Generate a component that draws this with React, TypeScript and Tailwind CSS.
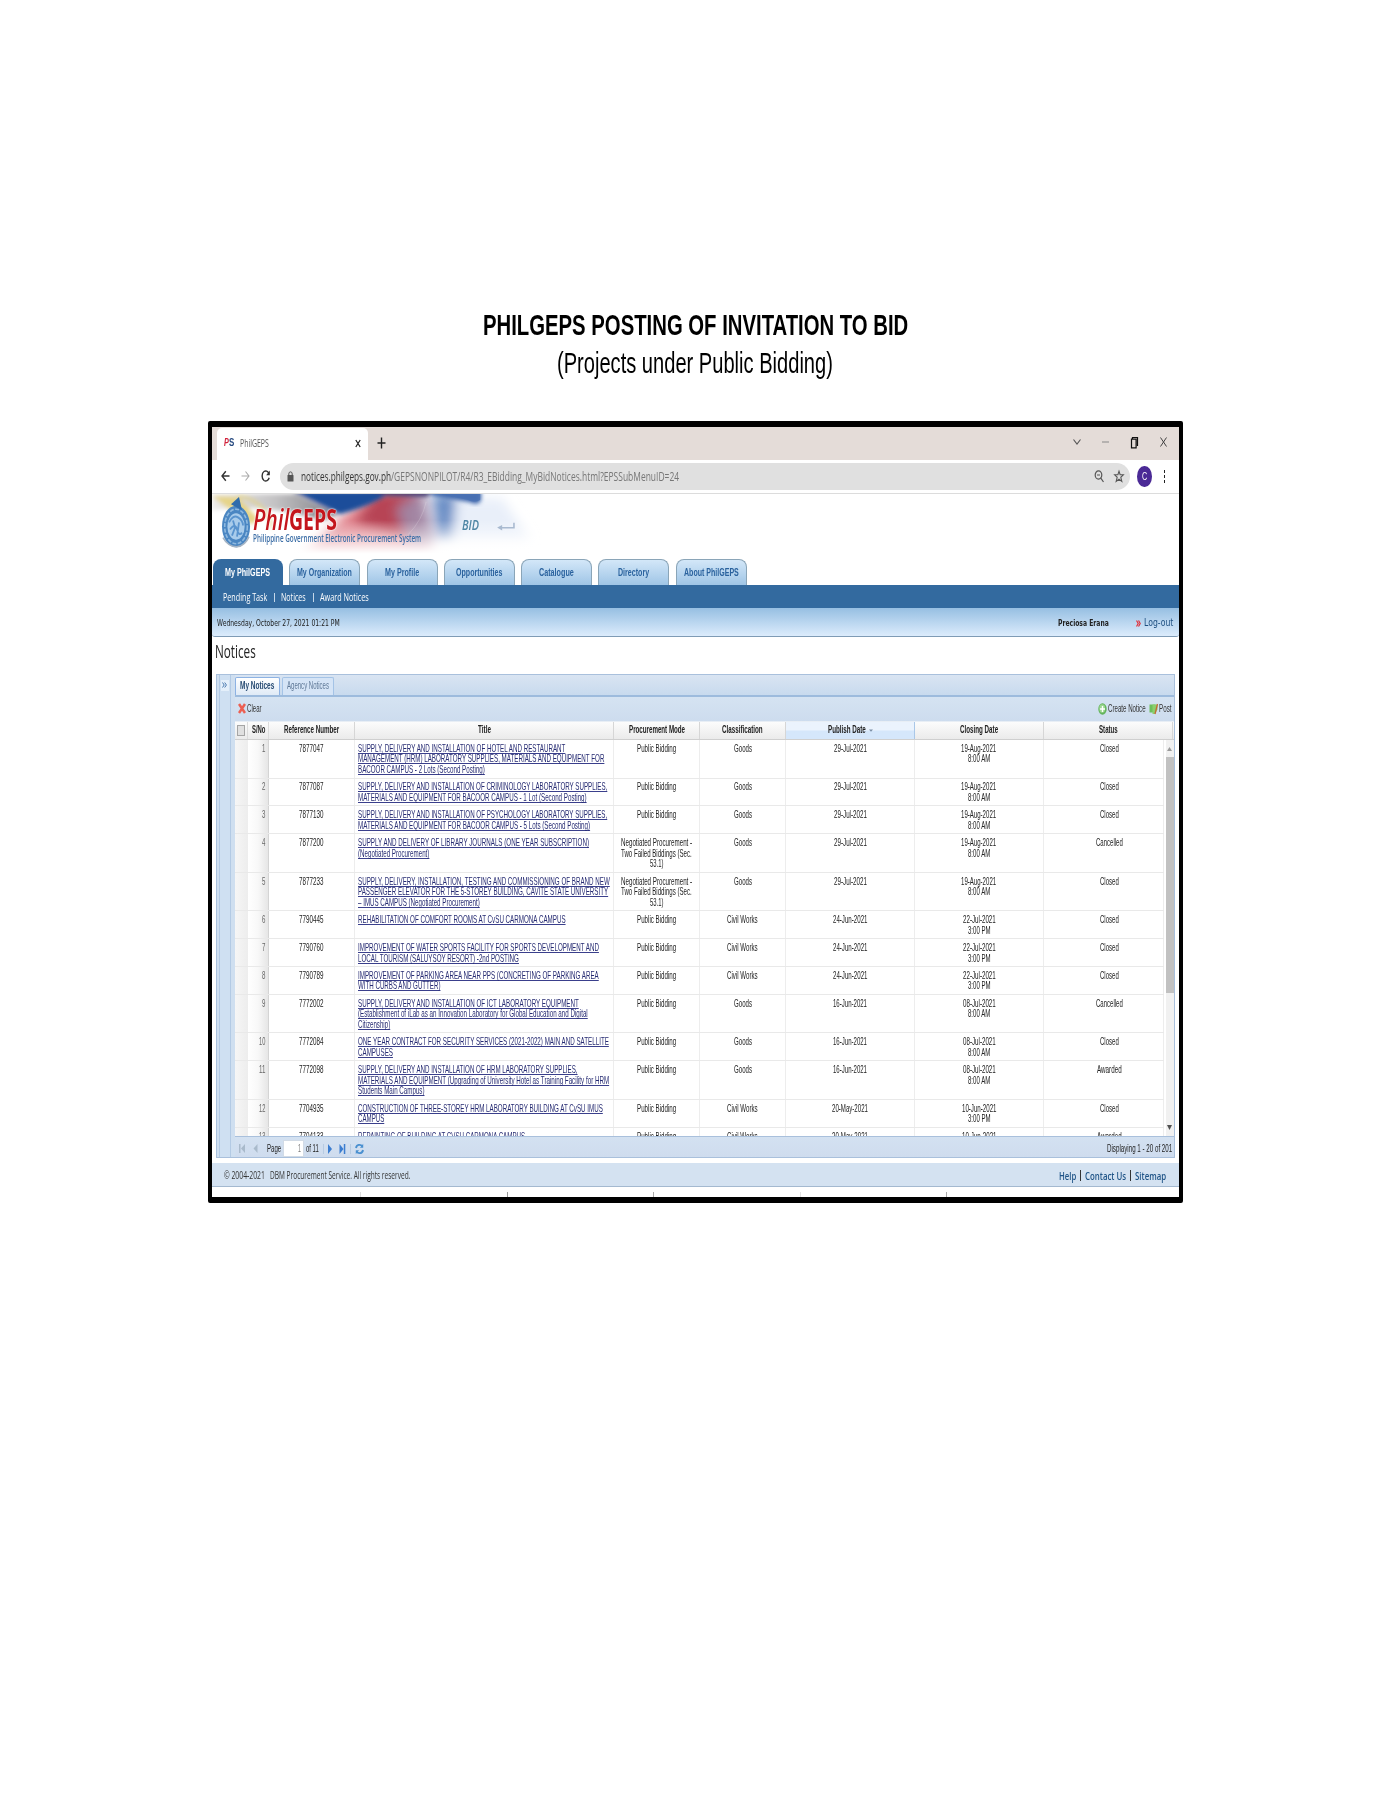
import { useLayoutEffect, useRef, useState, type ReactNode } from "react";

/** Single-line label condensed horizontally to a given width. */
function Fit({ w, className = "", inner = "", children }: { w: number; className?: string; inner?: string; children: ReactNode }) {
  const ref = useRef<HTMLSpanElement>(null);
  const [scale, setScale] = useState(1);
  useLayoutEffect(() => {
    if (ref.current) setScale(w / ref.current.offsetWidth);
  }, [w]);
  return (
    <span className={`block shrink-0 whitespace-nowrap ${className}`} style={{ width: w }}>
      <span ref={ref} className={`inline-block origin-left ${inner}`} style={{ transform: `scaleX(${scale})` }}>
        {children}
      </span>
    </span>
  );
}

type Line = [string, number];
type Notice = {
  no: number;
  ref: string;
  title: Line[];
  mode: Line[];
  cls: Line;
  pub: Line;
  close: Line;
  time: string;
  status: Line;
};

const PB: Line[] = [["Public Bidding", 39.5]];
const NP: Line[] = [
  ["Negotiated Procurement -", 71],
  ["Two Failed Biddings (Sec.", 70.5],
  ["53.1)", 13.5],
];
const GOODS: Line = ["Goods", 18];
const CIVIL: Line = ["Civil Works", 30.5];
const CLOSED: Line = ["Closed", 19];
const CANCELLED: Line = ["Cancelled", 27];
const AWARDED: Line = ["Awarded", 24.5];
const JUL29: Line = ["29-Jul-2021", 32.7];
const JUN24: Line = ["24-Jun-2021", 34.5];
const JUN16: Line = ["16-Jun-2021", 34];
const MAY20: Line = ["20-May-2021", 36];
const AUG19: Line = ["19-Aug-2021", 35.3];
const JUL22: Line = ["22-Jul-2021", 32.5];
const JUL08: Line = ["08-Jul-2021", 32.5];
const JUN10: Line = ["10-Jun-2021", 34.5];

const notices: Notice[] = [
  { no: 1, ref: "7877047", title: [["SUPPLY, DELIVERY AND INSTALLATION OF HOTEL AND RESTAURANT", 207.3], ["MANAGEMENT (HRM) LABORATORY SUPPLIES, MATERIALS AND EQUIPMENT FOR", 246.5], ["BACOOR CAMPUS - 2 Lots (Second Posting)", 127]], mode: PB, cls: GOODS, pub: JUL29, close: AUG19, time: "8:00 AM", status: CLOSED },
  { no: 2, ref: "7877087", title: [["SUPPLY, DELIVERY AND INSTALLATION OF CRIMINOLOGY LABORATORY SUPPLIES,", 249.5], ["MATERIALS AND EQUIPMENT FOR BACOOR CAMPUS - 1 Lot (Second Posting)", 228.7]], mode: PB, cls: GOODS, pub: JUL29, close: AUG19, time: "8:00 AM", status: CLOSED },
  { no: 3, ref: "7877130", title: [["SUPPLY, DELIVERY AND INSTALLATION OF PSYCHOLOGY LABORATORY SUPPLIES,", 249.5], ["MATERIALS AND EQUIPMENT FOR BACOOR CAMPUS - 5 Lots (Second Posting)", 232]], mode: PB, cls: GOODS, pub: JUL29, close: AUG19, time: "8:00 AM", status: CLOSED },
  { no: 4, ref: "7877200", title: [["SUPPLY AND DELIVERY OF LIBRARY JOURNALS (ONE YEAR SUBSCRIPTION)", 231], ["(Negotiated Procurement)", 71.5]], mode: NP, cls: GOODS, pub: JUL29, close: AUG19, time: "8:00 AM", status: CANCELLED },
  { no: 5, ref: "7877233", title: [["SUPPLY, DELIVERY, INSTALLATION, TESTING AND COMMISSIONING OF BRAND NEW", 251.7], ["PASSENGER ELEVATOR FOR THE 5-STOREY BUILDING, CAVITE STATE UNIVERSITY", 250], ["– IMUS CAMPUS (Negotiated Procurement)", 122]], mode: NP, cls: GOODS, pub: JUL29, close: AUG19, time: "8:00 AM", status: CLOSED },
  { no: 6, ref: "7790445", title: [["REHABILITATION OF COMFORT ROOMS AT CvSU CARMONA CAMPUS", 207.3]], mode: PB, cls: CIVIL, pub: JUN24, close: JUL22, time: "3:00 PM", status: CLOSED },
  { no: 7, ref: "7790760", title: [["IMPROVEMENT OF WATER SPORTS FACILITY FOR SPORTS DEVELOPMENT AND", 241], ["LOCAL TOURISM (SALUYSOY RESORT) -2nd POSTING", 161]], mode: PB, cls: CIVIL, pub: JUN24, close: JUL22, time: "3:00 PM", status: CLOSED },
  { no: 8, ref: "7790789", title: [["IMPROVEMENT OF PARKING AREA NEAR PPS (CONCRETING OF PARKING AREA", 240.7], ["WITH CURBS AND GUTTER)", 82.7]], mode: PB, cls: CIVIL, pub: JUN24, close: JUL22, time: "3:00 PM", status: CLOSED },
  { no: 9, ref: "7772002", title: [["SUPPLY, DELIVERY AND INSTALLATION OF ICT LABORATORY EQUIPMENT", 220.7], ["(Establishment of iLab as an Innovation Laboratory for Global Education and Digital", 230], ["Citizenship)", 32.3]], mode: PB, cls: GOODS, pub: JUN16, close: JUL08, time: "8:00 AM", status: CANCELLED },
  { no: 10, ref: "7772084", title: [["ONE YEAR CONTRACT FOR SECURITY SERVICES (2021-2022) MAIN AND SATELLITE", 250.7], ["CAMPUSES", 35]], mode: PB, cls: GOODS, pub: JUN16, close: JUL08, time: "8:00 AM", status: CLOSED },
  { no: 11, ref: "7772098", title: [["SUPPLY, DELIVERY AND INSTALLATION OF HRM LABORATORY SUPPLIES,", 219.5], ["MATERIALS AND EQUIPMENT (Upgrading of University Hotel as Training Facility for HRM", 251], ["Students Main Campus)", 66.7]], mode: PB, cls: GOODS, pub: JUN16, close: JUL08, time: "8:00 AM", status: AWARDED },
  { no: 12, ref: "7704935", title: [["CONSTRUCTION OF THREE-STOREY HRM LABORATORY BUILDING AT CvSU IMUS", 245], ["CAMPUS", 26.3]], mode: PB, cls: CIVIL, pub: MAY20, close: JUN10, time: "3:00 PM", status: CLOSED },
  { no: 13, ref: "7704133", title: [["REPAINTING OF BUILDING AT CVSU CARMONA CAMPUS", 167]], mode: PB, cls: CIVIL, pub: MAY20, close: JUN10, time: "3:00 PM", status: AWARDED },
];

const COLS = "grid grid-cols-[13.5px_21px_86px_259px_86px_86px_129px_129px_120px]";
const CELL = "flex flex-col items-center border-r border-[#ededed] pt-[2.8px]";

function Row({ n }: { n: Notice }) {
  const tall = n.title.length === 3 || n.mode.length === 3;
  return (
    <div className={`${COLS} ${tall ? "h-[38.5px]" : "h-[27.9px]"} shrink-0 border-b border-[#e9e9e9]`}>
      <div className="bg-linear-to-r from-[#f6f6f6] to-[#ededed]" />
      <div className="flex flex-col items-end border-r border-[#d4d4d4] bg-linear-to-r from-white via-[#f8f8f8] to-[#e6e6e6] pt-[2.8px] pr-[2.5px] text-[#666]">
        <Fit w={n.no > 9 ? 6.5 : 3.5}>{n.no}</Fit>
      </div>
      <div className={CELL}>
        <Fit w={24.5} className="-ml-[0.5px]">{n.ref}</Fit>
      </div>
      <div className="border-r border-[#ededed] pt-[2.8px] pl-[2.5px] text-[#262b72]">
        {n.title.map(([t, w]) => (
          <Fit key={t} w={w} inner="underline decoration-[#3a3f8c] decoration-1 underline-offset-[1px] [text-decoration-skip-ink:none]">{t}</Fit>
        ))}
      </div>
      <div className={CELL}>
        {n.mode.map(([t, w]) => (
          <Fit key={t} w={w}>{t}</Fit>
        ))}
      </div>
      <div className={CELL}>
        <Fit w={n.cls[1]}>{n.cls[0]}</Fit>
      </div>
      <div className={CELL}>
        <Fit w={n.pub[1]}>{n.pub[0]}</Fit>
      </div>
      <div className={CELL}>
        <Fit w={n.close[1]}>{n.close[0]}</Fit>
        <Fit w={22.5}>{n.time}</Fit>
      </div>
      <div className={`${CELL} pl-[11px]`}>
        <Fit w={n.status[1]}>{n.status[0]}</Fit>
      </div>
    </div>
  );
}

function Banner() {
  return (
    <svg className="absolute inset-0 h-full w-full" viewBox="0 0 966 64" preserveAspectRatio="none">
      <defs>
        <filter id="b2" x="-20%" y="-20%" width="140%" height="140%"><feGaussianBlur stdDeviation="2" /></filter>
        <filter id="b6" x="-50%" y="-50%" width="200%" height="200%"><feGaussianBlur stdDeviation="6" /></filter>
        <linearGradient id="fade" x1="0" y1="0" x2="0" y2="1">
          <stop offset="0.4" stopColor="#fff" stopOpacity="0" />
          <stop offset="0.92" stopColor="#fff" />
        </linearGradient>
        <linearGradient id="silver" x1="0" y1="0" x2="1" y2="0">
          <stop offset="0" stopColor="#ebe9e6" />
          <stop offset="0.5" stopColor="#b9b8ba" />
          <stop offset="1" stopColor="#66666e" />
        </linearGradient>
      </defs>
      <g filter="url(#b6)">
        <path d="M90 62 L128 24 L160 -2 L206 -2 L220 62Z" fill="#dc6d78" opacity="0.85" />
        <path d="M142 28 L166 -4 L206 -4 L200 46Z" fill="#b03a4c" opacity="0.85" />
        <path d="M184 14 L212 -4 L224 50 L198 54Z" fill="#a08aa8" opacity="0.9" />
        <path d="M220 0 H244 L242 46 L226 44Z" fill="#5f86c2" opacity="0.95" />
        <path d="M244 4 H290 L318 46 H238Z" fill="#e3ebf8" opacity="0.8" />
      </g>
      <g filter="url(#b2)">
        <path d="M0 0 H84 L126 20 L110 26 Q50 8 0 16Z" fill="url(#silver)" opacity="0.85" />
        <path d="M80 -3 H180 Q164 10 128 20Z" fill="#1d4d9a" />
        <path d="M160 -3 H222 L214 3 L176 2Z" fill="#4a3f74" />
        <path d="M0 2 L26 3 L48 26 L38 30Z" fill="#e6d488" />
        <path d="M26 2 Q54 6 60 34" stroke="#e0d28c" strokeWidth="3" fill="none" />
      </g>
      <rect width="330" height="64" fill="url(#fade)" />
      <path d="M214 -3 H269 V6 Q266 12 258 8 L222 2Z" fill="#3d66ac" filter="url(#b2)" />
      <path d="M230 0 H268 V6 Q262 9 256 6Z" fill="#4b72b4" opacity="0.8" />
      <path d="M214 8 Q210 26 196 40" stroke="#fff" strokeWidth="0.7" opacity="0.25" fill="none" />
      <g>
        <ellipse cx="24" cy="32" rx="14" ry="20.5" fill="#4a86c2" />
        <path d="M19 10 L27 3 L30 16Z" fill="#2f6cac" />
        <ellipse cx="24" cy="32" rx="11.3" ry="17" fill="none" stroke="#8fb9df" strokeWidth="1.6" strokeDasharray="4 1.5" />
        <ellipse cx="24" cy="32" rx="8.6" ry="13" fill="#a9cceb" />
        <path d="M17 28 Q21 20 26 23 T31 31 M18 35 Q23 28 25 35 T30 38 M21 26 L23 33 L20 41 M27 28 L25 42" stroke="#5a94ce" strokeWidth="1.8" fill="none" />
        <path d="M11 43 Q16 52 25 52 Q33 51 37 42" stroke="#a5b4c4" strokeWidth="1.6" fill="none" />
      </g>
      <path d="M285 33 l5 -2.6 v2 h11 v-4 h1.6 v5.6 h-12.6 v2z" fill="#a9bad0" />
    </svg>
  );
}

const tabs: [string, number][] = [
  ["My Organization", 55],
  ["My Profile", 34],
  ["Opportunities", 46.5],
  ["Catalogue", 35],
  ["Directory", 31],
  ["About PhilGEPS", 55],
];

const headers: [string, number][] = [
  ["Reference Number", 55],
  ["Title", 12.7],
  ["Procurement Mode", 56],
  ["Classification", 40.5],
  ["Publish Date", 38],
  ["Closing Date", 38],
];

function BrowserChrome() {
  return (
    <>
      <div className="flex h-[33px] shrink-0 items-start bg-[#e4dcd8] pl-[4.5px] pt-[1px]">
        <div className="flex h-[32px] w-[151px] items-center rounded-t-[5px] bg-white pb-[2px] pl-[7.5px] font-['Open_Sans',sans-serif]">
          <span className="flex">
            <Fit w={5} className="font-['Liberation_Sans',sans-serif] text-[11.5px] font-bold italic text-[#d2213a]">P</Fit>
            <Fit w={5.5} className="font-['Liberation_Sans',sans-serif] text-[11.5px] font-bold text-[#26497f]">S</Fit>
          </span>
          <Fit w={29} className="ml-[5px] text-[11px] text-[#555]">PhilGEPS</Fit>
          <svg className="ml-[86px]" width="6" height="9" viewBox="0 0 6 9"><path d="M.8 1 5.2 8M5.2 1 .8 8" stroke="#222" strokeWidth="1.2" /></svg>
        </div>
        <svg className="ml-[9.5px] mt-[9px]" width="9" height="12" viewBox="0 0 9 12"><path d="M4.5 .5v11M.5 6h8" stroke="#222" strokeWidth="1.4" /></svg>
        <svg className="ml-[680px] mt-[8px]" width="102" height="13" viewBox="0 0 102 13" fill="none">
          <path d="M7.5 3.5 11 8 14.5 3.5" stroke="#555" strokeWidth="1.1" />
          <path d="M36 6h7" stroke="#888" />
          <path d="M65.5 3.200h4.600v8.600h-4.600zM66.500 3V1.500h5V10" stroke="#111" strokeWidth="1.200" />
          <path d="M94.500 1.500 100.500 10.500M100.500 1.500 94.500 10.500" stroke="#444" />
        </svg>
      </div>
      <div className="flex h-[33.5px] shrink-0 items-center border-b-[1.5px] border-[#dcdcdc] bg-white pl-[9px]">
        <svg width="52" height="14" viewBox="0 0 52 14" fill="none">
          <path d="M8.500 7H1.200M4.800 2.200 1 7l3.800 4.800" stroke="#333" strokeWidth="1.400" />
          <path d="M20.500 7h7.500M24.500 2.500 28 7l-3.500 4.500" stroke="#aaa" strokeWidth="1.100" />
          <path d="M48 4.500C46.800 2.200 44.800 1.400 43 2.500 40.500 4 40.500 9.800 43 11.500c2 1.200 4.400.2 5.200-2.800" stroke="#333" strokeWidth="1.400" />
          <path d="M48.800 1.500v4.800h-3.600z" fill="#333" />
        </svg>
        <div className="ml-[7px] flex h-[27px] w-[850px] items-center rounded-full bg-[#e0e0e0] pl-[7px]">
          <svg width="7" height="11" viewBox="0 0 7 11"><rect y="4" x=".5" width="6" height="6.500" rx=".6" fill="#555" /><path d="M1.800 4.500V2.800a1.700 1.900 0 0 1 3.400 0v1.700" stroke="#555" fill="none" /></svg>
          <span className="ml-[7px] flex font-['Open_Sans',sans-serif] text-[13px] leading-none">
            <Fit w={90} className="text-[#333]">notices.philgeps.gov.ph</Fit>
            <Fit w={288} className="text-[#777]">/GEPSNONPILOT/R4/R3_EBidding_MyBidNotices.html?EPSSubMenuID=24</Fit>
          </span>
          <svg className="ml-[414px]" width="32" height="14" viewBox="0 0 32 14" fill="none" stroke="#555">
            <ellipse cx="5.500" cy="6" rx="3.300" ry="4.200" strokeWidth="1.200" />
            <path d="M7.800 9.200 10.500 13M4 6h3" strokeWidth="1.200" />
            <path d="M26 2.200l1.100 3.400 3.300.2-2.600 2.500 1 4.100-2.800-2.200-2.800 2.200 1-4.100-2.600-2.500 3.300-.2z" strokeWidth="1.100" />
          </svg>
        </div>
        <div className="ml-[7px] flex h-[21px] w-[14.500px] items-center justify-center rounded-[50%] bg-[#4b2a96] font-['Liberation_Sans',sans-serif] text-[10px] text-white">
          <Fit w={5}>C</Fit>
        </div>
        <div className="ml-[12px] flex flex-col gap-[2.500px]">
          <i className="h-[2.500px] w-[1.500px] bg-[#222]" />
          <i className="h-[2.500px] w-[1.500px] bg-[#222]" />
          <i className="h-[2.500px] w-[1.500px] bg-[#222]" />
        </div>
      </div>
    </>
  );
}

function SiteHeader() {
  return (
    <>
      <div className="relative h-[65px] shrink-0 overflow-hidden bg-white">
        <Banner />
        <div className="relative flex pl-[41px] pt-[12px] font-['Open_Sans',sans-serif]">
          <div className="flex flex-col">
            <div className="flex h-[27px] items-center text-[28px] leading-[27px] [text-shadow:0_0_2px_white,0_0_2px_white]">
              <Fit w={36} className="font-semibold italic text-[#c4151c]">Phil</Fit>
              <Fit w={48} className="font-bold text-[#c4151c]">GEPS</Fit>
            </div>
            <Fit w={168} className="-mt-[2px] text-[11.500px] font-semibold leading-[13px] text-[#3c6ea6]">Philippine Government Electronic Procurement System</Fit>
          </div>
          <Fit w={17} className="ml-[41px] mt-[10px] text-[14px] font-semibold italic leading-[18px] text-[#4f86a5]">BID</Fit>
        </div>
      </div>
      <div className="flex h-[26.500px] shrink-0 gap-[6.300px] bg-white pl-[0.500px] font-['Liberation_Sans',sans-serif] text-[10.500px] font-bold text-[#2a629e]">
        <div className="flex w-[70.500px] items-center justify-center rounded-t-[8px] bg-[#336a9f] pt-[3px] text-white">
          <Fit w={45}>My PhilGEPS</Fit>
        </div>
        {tabs.map(([t, w]) => (
          <div key={t} className="flex w-[71px] items-center justify-center rounded-t-[8px] border border-b-0 border-[#8aa5b8] bg-linear-to-b from-[#d3e7f8] to-[#9fc5e6] pt-[2px]">
            <Fit w={w}>{t}</Fit>
          </div>
        ))}
      </div>
      <div className="flex h-[22.500px] shrink-0 items-center bg-[#336a9f] pl-[10.500px] pt-[3px] font-['Open_Sans',sans-serif] text-[10.500px] text-white">
        <Fit w={44.500}>Pending Task</Fit>
        <i className="mx-[6.500px] h-[9px] w-px bg-[#c3d6e8]" />
        <Fit w={25}>Notices</Fit>
        <i className="mx-[6.500px] h-[9px] w-px bg-[#c3d6e8]" />
        <Fit w={49}>Award Notices</Fit>
      </div>
      <div className="flex h-[29.500px] shrink-0 items-center rounded-b-[3px] border-b border-[#7f9bb5] bg-linear-to-b from-[#96bfe2] to-[#dcecfc] pl-[5px] pt-[3px] font-['DejaVu_Sans',sans-serif] text-[9px] text-[#222]">
        <Fit w={123}>Wednesday, October 27, 2021 01:21 PM</Fit>
        <Fit w={50.500} className="ml-[717.500px] font-bold">Preciosa Erana</Fit>
        <svg className="ml-[27.500px]" width="5" height="7" viewBox="0 0 5 7" fill="none" stroke="#e0323c" strokeWidth="1.200"><path d="M.5.500 2.200 3.500.5 6.500M2.500.500 4.200 3.500 2.500 6.500" /></svg>
        <Fit w={29.500} className="ml-[3px] text-[11px] text-[#1e4f80]">Log-out</Fit>
      </div>
      <div className="h-[36.500px] shrink-0 pl-[3px] pt-[2px] font-['Open_Sans',sans-serif] text-[18px] leading-[25px] text-[#222]">
        <Fit w={41}>Notices</Fit>
      </div>
    </>
  );
}

function NoticesPanel() {
  return (
    <div className="ml-[3.500px] flex h-[484px] w-[959.500px] shrink-0 border border-[#a9c0dc] bg-[#cfdff0] font-['Liberation_Sans',sans-serif] text-[10.500px] text-[#222]">
      <div className="mr-[3.500px] ml-[2px] flex w-[12.500px] shrink-0 justify-center border-x border-[#b3cae4] bg-[#cfe0f2] pt-[5px]">
        <div className="flex h-[11px] w-[8px] items-center justify-center bg-[#e4effa]">
          <svg width="5" height="6" viewBox="0 0 5 6" fill="none" stroke="#4b7ab0"><path d="M.500.500 2.200 3 .5 5.500M2.700.500 4.400 3 2.700 5.500" /></svg>
        </div>
      </div>
      <div className="flex min-w-0 flex-1 flex-col">
        <div className="flex h-[20px] shrink-0 items-end bg-linear-to-b from-[#d9e4f2] to-[#c8daee] pt-[2px]">
          <div className="flex h-full w-[45px] items-center justify-center rounded-t-[2px] border border-b-0 border-[#8db2e3] bg-linear-to-b from-white to-[#dfeaf6] font-bold text-[#264a72]">
            <Fit w={34}>My Notices</Fit>
          </div>
          <div className="ml-[2px] flex h-full w-[52.500px] items-center justify-center rounded-t-[2px] border border-b-0 border-[#a4c3e6] bg-[#d5e4f6] text-[#5d7796]">
            <Fit w={42}>Agency Notices</Fit>
          </div>
        </div>
        <div className="h-[2.500px] shrink-0 border-y border-[#9dbbdd] bg-[#dfe9f5]" />
        <div className="flex h-[23.500px] shrink-0 items-center bg-linear-to-b from-[#d5e3f2] to-[#cddcee] pl-[3px] pr-[2.500px] text-[#333]">
          <svg width="8" height="11" viewBox="0 0 8 11"><path d="M1 1 7 10M7 1 1 10" stroke="#ec5f52" strokeWidth="2.500" /></svg>
          <Fit w={14.500} className="ml-[1.500px]">Clear</Fit>
          <svg className="ml-auto" width="9" height="12" viewBox="0 0 9 12"><ellipse cx="4.500" cy="6" rx="4.200" ry="5.700" fill="#62b35b" /><ellipse cx="4.200" cy="5.500" rx="3" ry="4.200" fill="#9ad68f" /><path d="M4.500 3v6M2 6h5" stroke="#fff" strokeWidth="1.400" /></svg>
          <Fit w={37.500} className="ml-[1.500px]">Create Notice</Fit>
          <svg className="ml-[3.500px]" width="9" height="12" viewBox="0 0 9 12"><path d="M.5 1.500h6v8h-6z" fill="#6dbf5c" /><path d="M3.500 1.500h5v5l-2.500 4.500h-2.500z" fill="#8ccf6c" /><path d="M8.500 1 6 11" stroke="#c46a35" strokeWidth="1.300" /></svg>
          <Fit w={12.500} className="ml-[1px]">Post</Fit>
        </div>
        <div className="grid h-[19.500px] shrink-0 grid-cols-[13.5px_21px_86px_259px_86px_86px_129px_129px_129px] border-y border-t-[#e8eef5] border-b-[#cfcfcf] bg-linear-to-b from-[#fcfcfc] to-[#ebebeb] font-bold">
          <div className="flex items-center justify-center border-r border-[#dcdcdc]">
            <i className="h-[11px] w-[8px] border border-[#a5a5a5] bg-[#e0e0e0]" />
          </div>
          <div className="flex items-center justify-center border-r border-[#dcdcdc] pl-[2px]">
            <Fit w={13.500}>S/No</Fit>
          </div>
          {headers.map(([t, w]) => (
            <div key={t} className={`flex items-center justify-center border-r ${t === "Publish Date" ? "border-[#a9c7e8] bg-linear-to-b from-[#ebf3fd] from-45% to-[#d5e7fb] to-55%" : "border-[#d6d6d6]"}`}>
              <Fit w={w}>{t}</Fit>
              {t === "Publish Date" && (
                <svg className="ml-[3px]" width="4" height="3" viewBox="0 0 4 3"><path d="M0 .500h4L2 2.800z" fill="#7a8ea5" /></svg>
              )}
            </div>
          ))}
          <div className="flex items-center justify-center border-r border-[#d6d6d6]">
            <Fit w={18.700}>Status</Fit>
          </div>
        </div>
        <div className="flex h-[396px] shrink-0 overflow-hidden bg-white leading-[10.600px]">
          <div className="flex flex-col">
            {notices.map((n) => (
              <Row key={n.no} n={n} />
            ))}
          </div>
          <div className="ml-[1.500px] flex w-[8.500px] flex-col items-center bg-[#f1f1f1]">
            <svg className="mt-[7px] mb-[6px] shrink-0" width="5" height="4" viewBox="0 0 5 4"><path d="M0 4h5L2.500 0z" fill="#9a9a9a" /></svg>
            <div className="h-[236px] w-full shrink-0 bg-[#c1c1c1]" />
            <svg className="mt-auto mb-[6px]" width="5" height="5" viewBox="0 0 5 5"><path d="M0 0h5L2.500 5z" fill="#505050" /></svg>
          </div>
        </div>
        <div className="flex flex-1 items-center border-t border-[#a9c0dc] bg-linear-to-b from-[#d3e1f1] to-[#cfdcee] pl-[4px] pt-[3px] pr-[2.500px]">
          <svg width="20" height="9" viewBox="0 0 20 9" fill="#a9bacb"><path d="M0 0h1.500v9H0zM6 0v9L2 4.500zM18.500 0v9l-4-4.500z" /></svg>
          <Fit w={14.500} className="ml-[8px]">Page</Fit>
          <div className="ml-[2px] flex h-[17px] w-[20.500px] items-center justify-end border border-[#d2dbe6] bg-white pr-[2px] text-[#777]">
            <Fit w={3}>1</Fit>
          </div>
          <Fit w={13} className="ml-[2px]">of 11</Fit>
          <i className="ml-[4px] h-[10px] w-px bg-[#b7cbe2]" />
          <svg className="ml-[4.500px]" width="18" height="10" viewBox="0 0 18 9" preserveAspectRatio="none" fill="#3b7dd0"><path d="M0 0v9l4-4.500zM11.500 0v9l4-4.500zM15.800 0h1.500v9h-1.500z" /></svg>
          <i className="ml-[3.500px] h-[10px] w-px bg-[#b7cbe2]" />
          <svg className="ml-[4px]" width="9" height="12" viewBox="0 0 9 12" fill="none" stroke="#4a90d0" strokeWidth="1.900">
            <path d="M1 5C1.500 1.500 5.500.800 7.500 3.500M8 7c-.5 3.500-4.500 4.200-6.500 1.500" />
            <path d="M8.200 .800v4H5zM.8 11.200v-4H4z" fill="#4a90d0" stroke="none" />
          </svg>
          <Fit w={65} className="ml-auto">Displaying 1 - 20 of 201</Fit>
        </div>
      </div>
    </div>
  );
}

function SiteFooter() {
  return (
    <>
      <div className="mt-[5.500px] flex h-[23.500px] shrink-0 items-center border-b-[1.500px] border-[#a4b9d0] bg-[#d4e2f1] pl-[12px] pt-[2.500px] font-['Open_Sans',sans-serif] text-[10.500px] text-[#333]">
        <Fit w={41}>© 2004-2021</Fit>
        <Fit w={140.500} className="ml-[4.500px]">DBM Procurement Service. All rights reserved.</Fit>
        <span className="ml-auto mr-[12px] flex items-center text-[11.500px] font-semibold text-[#1f5487]">
          <Fit w={17.500}>Help</Fit>
          <i className="mx-[4px] h-[11px] w-px bg-[#333]" />
          <Fit w={41}>Contact Us</Fit>
          <i className="mx-[4px] h-[11px] w-px bg-[#333]" />
          <Fit w={31.500}>Sitemap</Fit>
        </span>
      </div>
      <div className="flex flex-1 items-end bg-white pl-[148px]">
        <i className="h-[5px] w-px bg-[#ddd]" />
        <i className="ml-[145.500px] h-[5px] w-px bg-[#999]" />
        <i className="ml-[145.500px] h-[5px] w-px bg-[#aaa]" />
        <i className="ml-[145.500px] h-[5px] w-px bg-[#e2e2e2]" />
        <i className="ml-[145.500px] h-[5px] w-px bg-[#aaa]" />
      </div>
    </>
  );
}

export default function App() {
  return (
    <div className="flex h-[1800px] w-[1390px] flex-col bg-white">
      <header className="flex flex-col items-center pt-[306px] font-['Liberation_Sans',sans-serif] text-[30px] leading-[38px] text-black">
        <Fit w={425} className="font-bold">PHILGEPS POSTING OF INVITATION TO BID</Fit>
        <Fit w={276}>(Projects under Public Bidding)</Fit>
      </header>
      <main className="ml-[208px] mt-[39px] flex h-[782px] w-[974.500px] shrink-0 flex-col overflow-hidden rounded-[2px] border-x-4 border-y-[6px] border-black bg-white">
        <BrowserChrome />
        <SiteHeader />
        <NoticesPanel />
        <SiteFooter />
      </main>
    </div>
  );
}
